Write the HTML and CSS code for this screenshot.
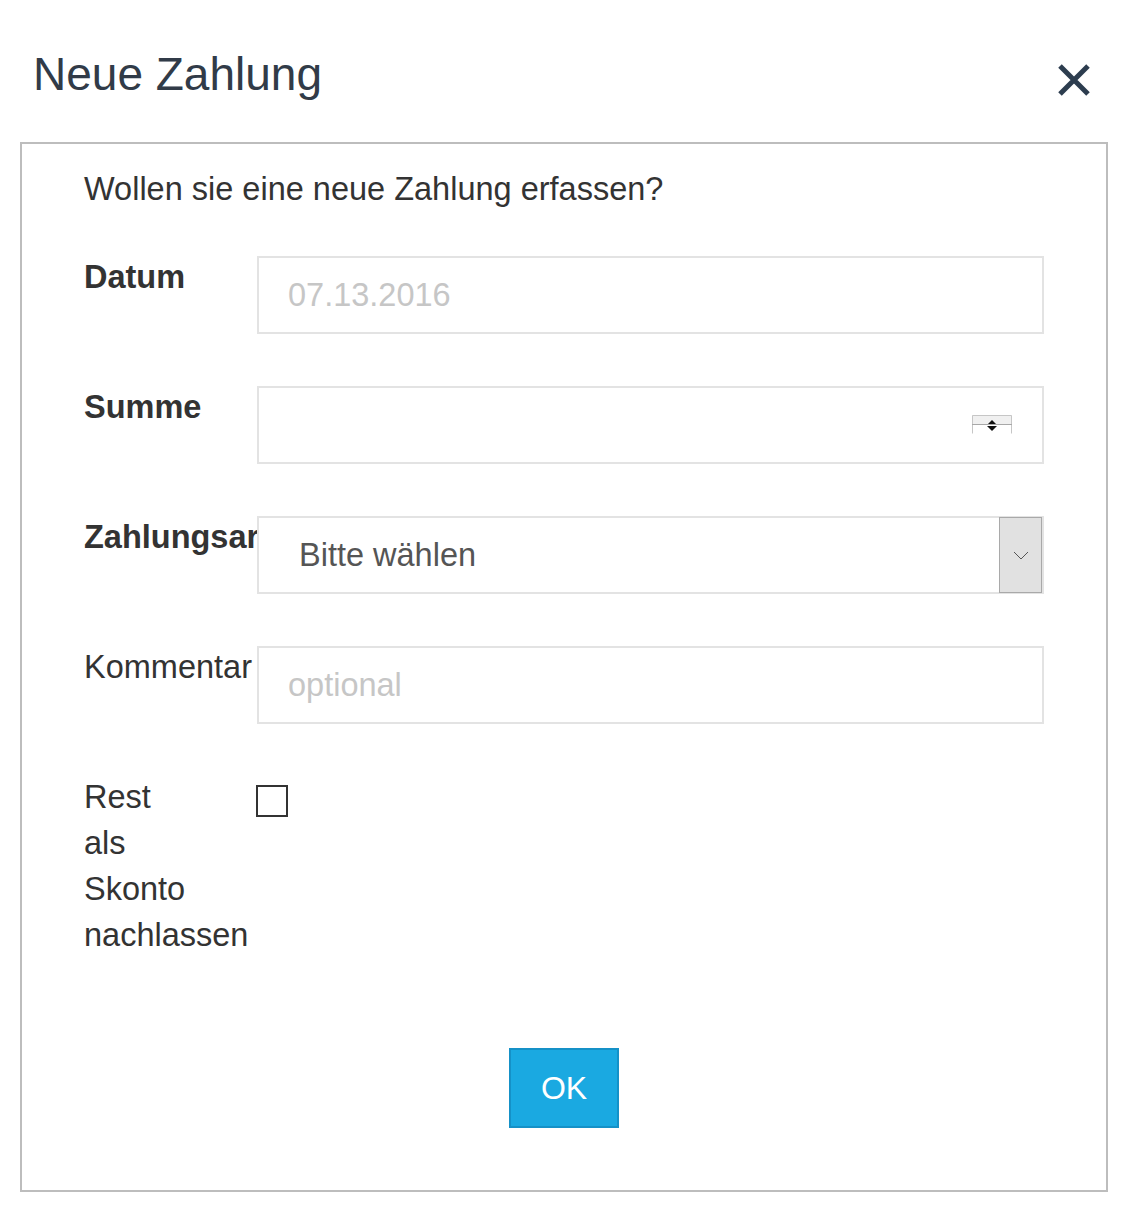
FILE: index.html
```html
<!DOCTYPE html>
<html lang="de">
<head>
    <meta charset="UTF-8">
    <meta name="viewport" content="width=device-width, initial-scale=1.0">
    <title>Neue Zahlung</title>
    <link rel="stylesheet" href="styles.css">
</head>
<body>
    <div class="modal-header">
        <h1 class="modal-title">Neue Zahlung</h1>
        <button class="close-button" aria-label="Schließen">
            <svg width="32" height="32" viewBox="0 0 32 32">
                <path d="M2 2L30 30M30 2L2 30" stroke="#2d3d4f" stroke-width="5" fill="none"/>
            </svg>
        </button>
    </div>

    <div class="modal-body">
        <p class="intro">Wollen sie eine neue Zahlung erfassen?</p>

        <div class="form-row">
            <label class="field-label bold" for="datum">Datum</label>
            <input class="field-input" type="text" id="datum" placeholder="07.13.2016">
        </div>

        <div class="form-row">
            <label class="field-label bold" for="summe">Summe</label>
            <div class="field-wrap">
                <input class="field-input" type="number" id="summe">
                <svg class="spinner" width="40" height="19" viewBox="0 0 40 19">
                    <rect x="0" y="0" width="40" height="9" fill="#f0f0f0"/>
                    <path d="M0.5 18.5V0.5H39.5V18.5" stroke="#c6c6c6" fill="none"/>
                    <line x1="0" y1="9.5" x2="40" y2="9.5" stroke="#a8a8a8"/>
                    <path d="M16 9L20 5L24 9Z" fill="#111"/>
                    <path d="M15 11H25L20 16Z" fill="#111"/>
                </svg>
            </div>
        </div>

        <div class="form-row">
            <label class="field-label bold" for="zahlungsart">Zahlungsart</label>
            <div class="field-wrap">
                <select class="field-input field-select" id="zahlungsart">
                    <option>Bitte wählen</option>
                </select>
                <span class="select-arrow">
                    <svg width="16" height="9" viewBox="0 0 16 9">
                        <path d="M1 1L8 8L15 1" stroke="#555" stroke-width="1" fill="none"/>
                    </svg>
                </span>
            </div>
        </div>

        <div class="form-row">
            <label class="field-label" for="kommentar">Kommentar</label>
            <input class="field-input" type="text" id="kommentar" placeholder="optional">
        </div>

        <div class="form-row last">
            <label class="field-label" for="skonto">Rest als Skonto nachlassen</label>
            <input class="checkbox" type="checkbox" id="skonto">
        </div>

        <div class="modal-footer">
            <button class="ok-button">OK</button>
        </div>
    </div>
</body>
</html>
```

FILE: styles.css
```css
body {
    margin: 0;
    padding: 0 24px 0 20px;
    font-family: 'Liberation Sans', Arial, sans-serif;
    font-size: 32.5px;
    line-height: 46px;
    color: #333;
    background-color: white;
}
.modal-header {
    display: flex;
    justify-content: space-between;
    align-items: flex-start;
    padding: 49px 18px 43px 13px;
}
.modal-title {
    margin: 0;
    font-size: 46px;
    font-weight: normal;
    line-height: 50px;
    color: #313b48;
}
.close-button {
    margin-top: 15px;
    padding: 0;
    border: none;
    background: none;
    width: 32px;
    height: 32px;
    cursor: pointer;
}
.close-button svg {
    display: block;
}
.modal-body {
    border: 2px solid #bdbdbd;
    padding: 22px 62px 62px 62px;
}
.intro {
    margin: 0 0 44px 0;
}
.form-row {
    display: flex;
    align-items: flex-start;
    margin-bottom: 52px;
}
.form-row.last {
    margin-bottom: 0;
}
.field-label {
    flex: 0 0 110px;
    width: 110px;
    min-width: 0;
    margin: -2px 63px 0 0;
    white-space: normal;
}
.bold {
    font-weight: bold;
}
.field-wrap {
    flex: 1;
    min-width: 0;
    position: relative;
    display: flex;
}
.field-input {
    flex: 1;
    min-width: 0;
    box-sizing: border-box;
    height: 78px;
    margin: 0;
    padding: 0 29px;
    border: 2px solid #e3e3e3;
    border-radius: 0;
    background-color: white;
    font-family: inherit;
    font-size: 32.5px;
    color: #555;
    outline: none;
}
.field-input::placeholder {
    color: #c6c6c6;
}
.field-input[type=number] {
    -moz-appearance: textfield;
}
.field-input::-webkit-inner-spin-button,
.field-input::-webkit-outer-spin-button {
    -webkit-appearance: none;
    margin: 0;
}
.spinner {
    position: absolute;
    right: 32px;
    top: 29px;
    pointer-events: none;
}
.field-select {
    -webkit-appearance: none;
    appearance: none;
    padding-left: 40px;
}
.select-arrow {
    position: absolute;
    top: 1px;
    bottom: 1px;
    right: 2px;
    width: 41px;
    display: flex;
    align-items: center;
    justify-content: center;
    background-color: #e1e1e1;
    border: 1px solid #a9a9a9;
    pointer-events: none;
}
.select-arrow svg {
    display: block;
}
.checkbox {
    -webkit-appearance: none;
    appearance: none;
    flex: 0 0 auto;
    width: 32px;
    height: 32px;
    margin: 9px 0 0 -1px;
    border: 2px solid #333;
    background-color: white;
}
.modal-footer {
    display: flex;
    justify-content: center;
    padding-top: 90px;
}
.ok-button {
    width: 110px;
    padding: 15px 0;
    border: 2px solid #1591c7;
    border-radius: 0;
    background-color: #1aa9e1;
    color: white;
    font-family: inherit;
    font-size: 32px;
    line-height: 46px;
    cursor: pointer;
}
```
